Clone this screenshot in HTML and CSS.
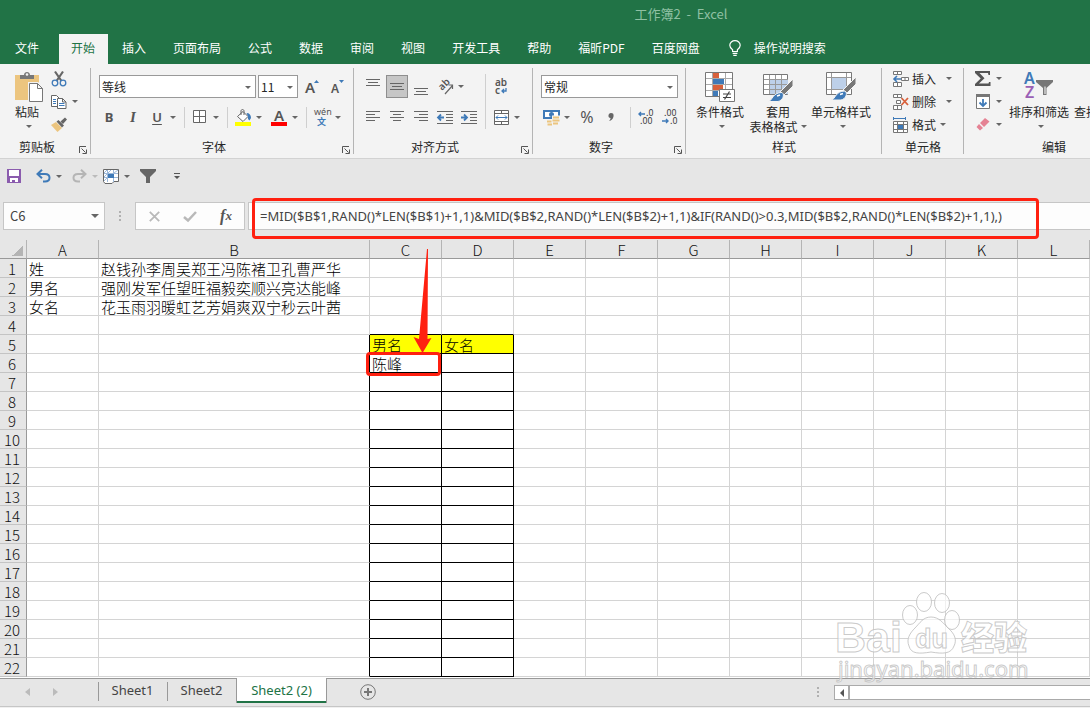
FILE: index.html
```html
<!DOCTYPE html>
<html lang="zh-CN">
<head>
<meta charset="utf-8">
<title>工作簿2 - Excel</title>
<link rel="stylesheet" href="styles.css">
</head>
<body>
<div class="app">
  <header class="titlebar">工作簿2&nbsp; -&nbsp; Excel</header>

  <nav class="tabs">
    <button class="tab tab-file">文件</button>
    <button class="tab tab-active">开始</button>
    <button class="tab">插入</button>
    <button class="tab">页面布局</button>
    <button class="tab">公式</button>
    <button class="tab">数据</button>
    <button class="tab">审阅</button>
    <button class="tab">视图</button>
    <button class="tab">开发工具</button>
    <button class="tab">帮助</button>
    <button class="tab">福昕PDF</button>
    <button class="tab">百度网盘</button>
    <button class="tab tab-tell">
      <svg width="12" height="16" viewBox="0 0 12 16" fill="none" stroke="#fff" stroke-width="1.2"><path d="M3.6 11.5V9.8C2 8.6 .8 7.2 .8 5.2a5.200 4.600 0 0 1 10.400 0c0 2-1.200 3.400-2.800 4.600v1.700zM3.600 13.300h4.800M4.300 15.300h3.400"/></svg>
      操作说明搜索
    </button>
  </nav>

  <div class="ribbon">
    <section class="group group-clip">
      <div class="group-body clip-body">
        <button class="big big-paste">
          <svg width="30" height="30" viewBox="0 0 30 30"><path fill="#ecc57f" d="M1 3h24v25H1z"/><path fill="#777" d="M6 7V3h4c0-4 6-4 6 0h4v4z"/><circle cx="13" cy="2.500" r="1.300" fill="#f3f3f3"/><path fill="#fff" stroke="#f3f3f3" stroke-width="3" d="M15.500 11.500h8l5 5v13h-13z"/><path fill="#fff" stroke="#777" d="M15.500 11.500h8l5 5v13h-13zM23.500 11.500v5h5"/></svg>
          <span>粘贴</span><i class="arrow"></i>
        </button>
        <div class="stack">
          <div class="line"><button class="tool" aria-label="剪切"><svg width="16" height="16" viewBox="0 0 16 16"><path stroke="#666" stroke-width="2.200" d="M4 .5 10.500 10M12 .5 5.500 10"/><circle cx="4" cy="12" r="2.800" fill="none" stroke="#3f7ab8" stroke-width="1.300"/><circle cx="12" cy="12" r="2.800" fill="none" stroke="#3f7ab8" stroke-width="1.300"/></svg></button></div>
          <div class="line"><button class="tool" aria-label="复制"><svg width="16" height="16" viewBox="0 0 16 16" fill="#fff" stroke="#666"><path d="M.5 1.500h5l3 3v8h-8z"/><path d="M6.500 4.500h5l3.500 3.500v6.500H6.500z"/><path d="M11.500 4.500v3.500h3.500" fill="none"/><path stroke="#3f7ab8" d="M2 5.500h3M2 7.500h3M2 9.500h3M8 9.500h5.500M8 11.500h5.500"/></svg></button><button class="caret" aria-label="复制选项"></button></div>
          <div class="line"><button class="tool" aria-label="格式刷"><svg width="16" height="16" viewBox="0 0 16 16"><path fill="#ecc57f" d="M0 8 5 5l6 6-4.500 4z"/><path fill="#666" d="m5.500 4.500 2-1.500 5.500 5.500-2 2zM9.500 4.500 14 .5 16 2.500 12 7z"/></svg></button></div>
        </div>
      </div>
      <footer class="group-foot"><span>剪贴板</span><button class="launcher" aria-label="剪贴板设置"><svg width="8" height="8" viewBox="0 0 8 8" fill="none" stroke="#555"><path d="M.5 7V.5H7M2.500 2.500l4 4M7.500 3.500v4h-4"/></svg></button></footer>
    </section>

    <section class="group group-font">
      <div class="group-body rows">
        <div class="line line-fields">
          <label class="field field-font"><select aria-label="字体"><option>等线</option></select></label>
          <label class="field field-size"><select aria-label="字号"><option>11</option></select></label>
          <button class="tool" aria-label="增大字号"><svg width="14" height="20" viewBox="0 0 14 20"><text class="glyph-a" x="0" y="16" font-size="15">A</text><path fill="#3f7ab8" d="m9 6 2.500-3L14 6z"/></svg></button>
          <button class="tool tool-shrink" aria-label="减小字号"><svg width="14" height="20" viewBox="0 0 14 20"><text class="glyph-a" x="1" y="16" font-size="12">A</text><path fill="#3f7ab8" d="m9 3 2.500 3L14 3z"/></svg></button>
        </div>
        <div class="line line-tools">
          <button class="tool letter bold">B</button><button class="tool letter italic">I</button><button class="tool letter under">U</button><button class="caret" aria-label="下划线选项"></button>
          <span class="sep"></span>
          <button class="tool" aria-label="边框"><svg width="14" height="14" viewBox="0 0 14 14" fill="#fff" stroke="#666"><path d="M.5.5h12v12H.5zM6.500.5v12M.5 6.500h12"/></svg></button><button class="caret" aria-label="边框选项"></button>
          <span class="sep"></span>
          <button class="tool" aria-label="填充颜色"><svg width="16" height="17" viewBox="0 0 16 17"><path fill="#fff" stroke="#666" d="m2.500 7.500 5.500-5 5 5-5 5z"/><path fill="none" stroke="#666" d="M6 6V2c0-2 3-2 3 0v4"/><path fill="#3f7ab8" d="M11.500 4c3 0 4.500 2 4.500 5l-1.500 2.500L13 10V7.500z"/><path fill="#ff0" d="M0 13h16v4H0z"/></svg></button><button class="caret caret-wide" aria-label="填充选项"></button>
          <button class="tool" aria-label="字体颜色"><svg width="16" height="17" viewBox="0 0 16 17"><text class="glyph-a" x="3" y="12" font-size="15">A</text><path fill="#f00" d="M0 13h16v4H0z"/></svg></button><button class="caret" aria-label="字体颜色选项"></button>
          <span class="sep"></span>
          <button class="tool" aria-label="拼音"><svg width="18" height="18" viewBox="0 0 18 18"><text x="1" y="7" class="pinyin">wén</text><text x="4" y="17" class="pinyin-cn">文</text></svg></button><button class="caret" aria-label="拼音选项"></button>
        </div>
      </div>
      <footer class="group-foot"><span>字体</span><button class="launcher" aria-label="字体设置"><svg width="8" height="8" viewBox="0 0 8 8" fill="none" stroke="#555"><path d="M.5 7V.5H7M2.500 2.500l4 4M7.500 3.500v4h-4"/></svg></button></footer>
    </section>

    <section class="group group-align">
      <div class="group-body align-body">
        <div class="rows">
          <div class="line line-fields">
            <button class="tool" aria-label="顶端对齐"><svg width="14" height="16" viewBox="0 0 14 16" stroke="#666"><path d="M0 .5h14M2 3.500h10M0 6.500h14"/></svg></button>
            <button class="tool tool-on" aria-label="垂直居中"><svg width="14" height="16" viewBox="0 0 14 16" stroke="#666"><path d="M0 4.500h14M2 7.500h10M0 10.500h14"/></svg></button>
            <button class="tool" aria-label="底端对齐"><svg width="14" height="16" viewBox="0 0 14 16" stroke="#666"><path d="M0 9.500h14M2 12.500h10M0 15.500h14"/></svg></button>
            <button class="tool" aria-label="方向"><svg width="17" height="16" viewBox="0 0 17 16"><text x="0" y="0" class="glyph-ab" transform="translate(5 12) rotate(-45)">ab</text><path fill="none" stroke="#666" stroke-width="1.200" d="m8 15 7.500-8.500M11.500 6h4v4"/></svg></button><button class="caret" aria-label="方向选项"></button>
          </div>
          <div class="line line-tools">
            <button class="tool" aria-label="左对齐"><svg width="14" height="12" viewBox="0 0 14 12" stroke="#666"><path d="M0 .5h14M0 3.500h9M0 6.500h14M0 9.500h9"/></svg></button>
            <button class="tool" aria-label="居中"><svg width="14" height="12" viewBox="0 0 14 12" stroke="#666"><path d="M0 .5h14M3 3.500h8M0 6.500h14M3 9.500h8"/></svg></button>
            <button class="tool" aria-label="右对齐"><svg width="14" height="12" viewBox="0 0 14 12" stroke="#666"><path d="M0 .5h14M5 3.500h9M0 6.500h14M5 9.500h9"/></svg></button>
            <button class="tool" aria-label="减少缩进量"><svg width="16" height="13" viewBox="0 0 16 13" stroke="#666"><path d="M0 .5h16M9 3.500h7M9 6.500h7M9 9.500h7M0 12.500h16"/><path fill="none" stroke="#3f7ab8" stroke-width="1.800" d="M7 6.500H1M4 3.500l-3 3 3 3"/></svg></button>
            <button class="tool" aria-label="增加缩进量"><svg width="16" height="13" viewBox="0 0 16 13" stroke="#666"><path d="M0 .5h16M9 3.500h7M9 6.500h7M9 9.500h7M0 12.500h16"/><path fill="none" stroke="#3f7ab8" stroke-width="1.800" d="M0 6.500h6M3 3.500l3 3-3 3"/></svg></button>
          </div>
        </div>
        <span class="sep sep-tall"></span>
        <div class="rows">
          <div class="line line-fields"><button class="tool" aria-label="自动换行"><svg width="14" height="18" viewBox="0 0 14 18"><text x="1" y="8" class="glyph-ab">ab</text><text x="1" y="16" class="glyph-ab">c</text><path fill="none" stroke="#3f7ab8" stroke-width="1.300" d="M12 10v3H8M10 11l-2 2 2 2"/></svg></button></div>
          <div class="line line-tools"><button class="tool" aria-label="合并后居中"><svg width="15" height="15" viewBox="0 0 15 15" fill="#fff" stroke="#666"><path d="M.5.5h14v14H.5zM.5 3.500h14M.5 11.500h14M7.500.5v3M7.500 11.500v3"/><path fill="none" stroke="#3f7ab8" d="M2 7.500h11M4 5.500l-2 2 2 2M11 5.500l2 2-2 2"/></svg></button><button class="caret" aria-label="合并选项"></button></div>
        </div>
      </div>
      <footer class="group-foot"><span>对齐方式</span><button class="launcher" aria-label="对齐设置"><svg width="8" height="8" viewBox="0 0 8 8" fill="none" stroke="#555"><path d="M.5 7V.5H7M2.500 2.500l4 4M7.500 3.500v4h-4"/></svg></button></footer>
    </section>

    <section class="group group-number">
      <div class="group-body rows">
        <div class="line line-fields"><label class="field field-number"><select aria-label="数字格式"><option>常规</option></select></label></div>
        <div class="line line-tools">
          <button class="tool" aria-label="会计数字格式"><svg width="17" height="17" viewBox="0 0 17 17"><path fill="#fff" stroke="#3f7ab8" stroke-width="2" d="M1 2h15v7H1z"/><circle cx="8.500" cy="5.500" r="2.500" fill="#3f7ab8"/><path fill="#f3f3f3" d="M9 6.500h8V17H9zM3.500 11H11v6H3.500z"/><path fill="#ecc57f" d="M10 7.500h6v2h-6zM9.500 10.500h7v2h-7zM10 13.500h5v2h-5zM4 11.500h4.500v2H4zM4.500 14.500H9v2H4.500z"/></svg></button><button class="caret caret-wide" aria-label="货币选项"></button>
          <button class="tool letter percent">%</button>
          <button class="tool" aria-label="千位分隔"><svg width="6" height="9" viewBox="0 0 6 9"><path fill="#666" d="M3 0c2 0 3 1 2.500 3.500C5 6 3.500 7.500 1 8c1-1 1.500-1.700 1.500-3C-.5 5 0 0 3 0z"/></svg></button>
          <span class="sep"></span>
          <button class="tool" aria-label="增加小数位数"><svg width="16" height="15" viewBox="0 0 16 15"><text class="digits" x="8" y="6">.0</text><text class="digits" x="2" y="14">.00</text><path fill="none" stroke="#3f7ab8" stroke-width="1.400" d="M7 4H1M3 2 1 4l2 2"/></svg></button>
          <button class="tool" aria-label="减少小数位数"><svg width="16" height="15" viewBox="0 0 16 15"><text class="digits" x="2" y="6">.00</text><text class="digits" x="8" y="14">.0</text><path fill="none" stroke="#3f7ab8" stroke-width="1.400" d="M0 11h6M4 9l2 2-2 2"/></svg></button>
        </div>
      </div>
      <footer class="group-foot"><span>数字</span><button class="launcher" aria-label="数字设置"><svg width="8" height="8" viewBox="0 0 8 8" fill="none" stroke="#555"><path d="M.5 7V.5H7M2.500 2.500l4 4M7.500 3.500v4h-4"/></svg></button></footer>
    </section>

    <section class="group group-style">
      <div class="group-body style-body">
        <button class="big big-cond">
          <svg width="30" height="30" viewBox="0 0 30 30"><path fill="#fff" stroke="#777" d="M.5.5h27v24H.5z"/><path stroke="#aaa" d="M7.500 1v23M20.500 1v23M1 6.500h26M1 12.500h26M1 18.500h26"/><path fill="#d8613c" d="M8 1h6v5H8zM8 13h10v5H8z"/><path fill="#3f7ab8" d="M8 7h11v5H8zM8 19h5v5H8z"/><path fill="#fff" stroke="#777" d="M14.500 17.500h15v12h-15z"/><path stroke="#444" stroke-width="1.200" d="M18 22h8M18 25.500h8M24.500 19.500l-5 8"/></svg>
          <span>条件格式</span><i class="arrow"></i>
        </button>
        <button class="big big-table">
          <svg width="30" height="30" viewBox="0 0 30 30"><path fill="#fff" stroke="#777" d="M.5 2.500h24v20H.5z"/><path fill="#bdd0e9" d="M7 8h18v14H7z"/><path stroke="#999" d="M6.500 3v19M12.500 3v19M18.500 3v19M1 7.500h24M1 12.500h24M1 17.500h24"/><path fill="#777" stroke="#f3f3f3" d="M30 7v7l-9 9-4-3z"/><path fill="#3f7ab8" stroke="#f3f3f3" d="M19 20.500c3 2 1 8-4 9H5.500c4-1 4-9 13.500-9z"/><path stroke="#fff" stroke-width="1.500" d="m14 24 3-1"/></svg>
          <span>套用</span><span class="with-arrow">表格格式<i class="arrow"></i></span>
        </button>
        <button class="big big-cell">
          <svg width="30" height="30" viewBox="0 0 30 30"><path fill="#fff" stroke="#777" d="M.5.5h25v22H.5z"/><path stroke="#999" d="M5.500 1v21M20.500 1v21M1 5.500h24M1 17.500h24"/><path fill="#bdd0e9" d="M6 6h14v11H6z"/><path fill="#777" stroke="#f3f3f3" d="M30 5v7l-9 9-4-3z"/><path fill="#3f7ab8" stroke="#f3f3f3" d="M19 19c3 2 1 8-4 9H5.500c4-1 4-9 13.500-9z"/><path stroke="#fff" stroke-width="1.500" d="m14 22.500 3-1"/></svg>
          <span>单元格样式</span><i class="arrow"></i>
        </button>
      </div>
      <footer class="group-foot"><span>样式</span></footer>
    </section>

    <section class="group group-cells">
      <div class="group-body stack cells-body">
        <div class="line"><button class="wide"><svg width="16" height="16" viewBox="0 0 16 16" fill="#fff" stroke="#777"><path d="M.5.500h8v3h-8zM4.500.5v3M.5 11.500h8v4h-8zM4.500 11.500v4M8.500 6.500h7v3h-7zM12 6.500v3"/><path fill="none" stroke="#3f7ab8" stroke-width="1.600" d="M8 8H1M4 5 1 8l3 3"/></svg>插入</button><button class="caret" aria-label="插入选项"></button></div>
        <div class="line"><button class="wide"><svg width="16" height="16" viewBox="0 0 16 16" fill="#fff" stroke="#777"><path d="M.5.500h8v3h-8zM4.500.5v3M.5 11.500h8v4h-8zM4.500 11.500v4M3.500 6.500h4v3h-4z"/><path fill="none" stroke="#d8613c" stroke-width="1.800" d="m8.500 4 6.500 7M15 4l-6.500 7"/></svg>删除</button><button class="caret" aria-label="删除选项"></button></div>
        <div class="line line-near"><button class="wide"><svg width="16" height="16" viewBox="0 0 16 16" fill="#fff" stroke="#777"><path d="M.5 4.500h14v11H.5zM4.500 4.500v11M10.500 4.500v11M.5 7.500h14M.5 12.500h14"/><path fill="#3f7ab8" stroke="none" d="M5 8h5v4H5z"/><path stroke="#3f7ab8" fill="none" d="M.5 0v3M12.500 0v3M1 1.500h11"/></svg>格式</button><button class="caret" aria-label="格式选项"></button></div>
      </div>
      <footer class="group-foot"><span>单元格</span></footer>
    </section>

    <section class="group group-edit">
      <div class="group-body edit-body">
        <div class="stack">
          <div class="line"><button class="tool" aria-label="自动求和"><svg width="16" height="15" viewBox="0 0 16 15"><path fill="#555" d="M0 0h15v4h-1.500L13 2H4.500l5 5.300L4 12.500h9.500L14 11h1.500v4H0v-2l5.700-5.500L0 2z"/></svg></button><button class="caret" aria-label="求和选项"></button></div>
          <div class="line"><button class="tool" aria-label="填充"><svg width="14" height="15" viewBox="0 0 14 15"><path fill="#fff" stroke="#777" d="M.5.5h13v14H.5z"/><path fill="#777" d="M0 0h14v3H0z"/><path fill="none" stroke="#3f7ab8" stroke-width="1.800" d="M7 5v7M3.500 8.500 7 12l3.500-3.500"/></svg></button><button class="caret" aria-label="填充选项"></button></div>
          <div class="line"><button class="tool" aria-label="清除"><svg width="14" height="13" viewBox="0 0 14 13"><path fill="#e58294" d="m9 0 4.500 3.500L8 9 4 5zM3 6l4 4-3 2.500L.5 9z"/></svg></button><button class="caret" aria-label="清除选项"></button></div>
        </div>
        <button class="big big-sort">
          <svg width="30" height="30" viewBox="0 0 30 30"><text x="0" y="12" class="sort-a">A</text><text x="1" y="26" class="sort-z">Z</text><path fill="#777" d="M12 8h17v2l-6.500 6v7h-3.500v-7L12 10z"/><path fill="#fff" d="M20.500 14.500h1V22h-1z"/></svg>
          <span>排序和筛选</span><i class="arrow"></i>
        </button>
        <button class="big big-find">
          <svg width="24" height="30" viewBox="0 0 24 30" fill="none" stroke="#777" stroke-width="2"><circle cx="14" cy="11" r="7"/><path d="m9 16-7 8"/></svg>
          <span>查找和选择</span><i class="arrow"></i>
        </button>
      </div>
      <footer class="group-foot"><span>编辑</span></footer>
    </section>
  </div>

  <div class="quick">
    <button class="tool" aria-label="保存"><svg width="14" height="14" viewBox="0 0 14 14"><path fill="#8b5cae" d="M0 0h14v14H0z"/><path fill="#fff" d="M2 1h10v6H2zM3 9h8v4H8v-2H5v2H3z"/></svg></button>
    <button class="tool q-undo" aria-label="撤消"><svg width="15" height="14" viewBox="0 0 15 14" fill="none" stroke="#3f7ab8" stroke-width="2"><path d="M6 .8 1.500 5 6 9.200M2 5h7c6 0 6 7.500 0 7.500H7"/></svg></button><button class="caret" aria-label="撤消记录"></button>
    <button class="tool q-redo" aria-label="恢复"><svg width="15" height="14" viewBox="0 0 15 14" fill="none" stroke="#b5b5b5" stroke-width="2"><path d="M9 .8 13.500 5 9 9.200M13 5H6c-6 0-6 7.500 0 7.500h2"/></svg></button><button class="caret caret-off" aria-label="恢复记录"></button>
    <button class="tool" aria-label="选择窗格"><svg width="16" height="15" viewBox="0 0 16 15"><path fill="#fff" stroke="#666" d="M.5.5h15v12H11l-2 2H2l-1.500-2z"/><path stroke="#9db9da" d="M4.500 1v12M10.500 1v12M1 4.500h14M1 8.500h14M1 4l3-3M5 4l3-3M11 4l4-3M1 8l3-3M1 12l3-3"/><path fill="#3f7ab8" d="M5 5h6v4H5z"/></svg></button><button class="caret" aria-label="选择选项"></button>
    <button class="tool q-filter" aria-label="筛选"><svg width="16" height="14" viewBox="0 0 16 14"><path fill="#666" d="M0 0h16v2L10 8v6H6V8L0 2z"/></svg></button>
    <button class="tool q-more" aria-label="自定义快速访问工具栏"><svg width="6" height="7" viewBox="0 0 6 7"><path fill="#555" d="M0 0h6v1H0zM0 3h6L3 6z"/></svg></button>
  </div>

  <div class="formula-bar">
    <div class="namebox"><input type="text" value="C6" aria-label="名称框"><button class="caret" aria-label="名称列表"></button></div>
    <span class="grip"></span>
    <div class="fx-box">
      <button class="tool" aria-label="取消"><svg width="11" height="11" viewBox="0 0 11 11" stroke="#b9b9b9" stroke-width="1.800"><path d="m.8.8 9.400 9.400M10.200.8.8 10.200"/></svg></button>
      <button class="tool" aria-label="输入"><svg width="14" height="11" viewBox="0 0 14 11" fill="none" stroke="#b9b9b9" stroke-width="2.500"><path d="m1 6 4 3.500L13 1"/></svg></button>
      <button class="tool fx" aria-label="插入函数">f<small>x</small></button>
    </div>
    <div class="formula">
      <input type="text" aria-label="编辑栏" value="=MID($B$1,RAND()*LEN($B$1)+1,1)&amp;MID($B$2,RAND()*LEN($B$2)+1,1)&amp;IF(RAND()&gt;0.3,MID($B$2,RAND()*LEN($B$2)+1,1),)">
      <span class="mark mark-formula"></span>
    </div>
  </div>

  <main class="sheet">
    <table class="grid">
      <colgroup><col class="col-head"><col class="col-std"><col class="col-names"><col class="col-std"><col class="col-std"><col class="col-std"><col class="col-std"><col class="col-std"><col class="col-std"><col class="col-std"><col class="col-std"><col class="col-std"><col></colgroup>
      <thead><tr><th class="corner"></th><th>A</th><th>B</th><th>C</th><th>D</th><th>E</th><th>F</th><th>G</th><th>H</th><th>I</th><th>J</th><th>K</th><th>L</th></tr></thead>
      <tbody>
        <tr><th>1</th><td>姓</td><td>赵钱孙李周吴郑王冯陈褚卫孔曹严华</td><td></td><td></td><td></td><td></td><td></td><td></td><td></td><td></td><td></td><td></td></tr>
        <tr><th>2</th><td>男名</td><td>强刚发军任望旺福毅奕顺兴亮达能峰</td><td></td><td></td><td></td><td></td><td></td><td></td><td></td><td></td><td></td><td></td></tr>
        <tr><th>3</th><td>女名</td><td>花玉雨羽暖虹艺芳娟爽双宁秒云叶茜</td><td></td><td></td><td></td><td></td><td></td><td></td><td></td><td></td><td></td><td></td></tr>
        <tr class="above"><th>4</th><td></td><td></td><td></td><td></td><td></td><td></td><td></td><td></td><td></td><td></td><td></td><td></td></tr>
        <tr class="framed titles"><th>5</th><td></td><td></td><td>男名</td><td>女名</td><td></td><td></td><td></td><td></td><td></td><td></td><td></td><td></td></tr>
        <tr class="framed"><th>6</th><td></td><td></td><td class="current">陈峰<span class="mark mark-cell"></span><svg class="pointer" width="18" height="104" viewBox="0 0 18 104"><path fill="#ff2010" d="M14 0h1l-.5 90 4-1L9.500 104 .500 88l5.500 2z"/></svg></td><td></td><td></td><td></td><td></td><td></td><td></td><td></td><td></td><td></td></tr>
        <tr class="framed"><th>7</th><td></td><td></td><td></td><td></td><td></td><td></td><td></td><td></td><td></td><td></td><td></td><td></td></tr>
        <tr class="framed"><th>8</th><td></td><td></td><td></td><td></td><td></td><td></td><td></td><td></td><td></td><td></td><td></td><td></td></tr>
        <tr class="framed"><th>9</th><td></td><td></td><td></td><td></td><td></td><td></td><td></td><td></td><td></td><td></td><td></td><td></td></tr>
        <tr class="framed"><th>10</th><td></td><td></td><td></td><td></td><td></td><td></td><td></td><td></td><td></td><td></td><td></td><td></td></tr>
        <tr class="framed"><th>11</th><td></td><td></td><td></td><td></td><td></td><td></td><td></td><td></td><td></td><td></td><td></td><td></td></tr>
        <tr class="framed"><th>12</th><td></td><td></td><td></td><td></td><td></td><td></td><td></td><td></td><td></td><td></td><td></td><td></td></tr>
        <tr class="framed"><th>13</th><td></td><td></td><td></td><td></td><td></td><td></td><td></td><td></td><td></td><td></td><td></td><td></td></tr>
        <tr class="framed"><th>14</th><td></td><td></td><td></td><td></td><td></td><td></td><td></td><td></td><td></td><td></td><td></td><td></td></tr>
        <tr class="framed"><th>15</th><td></td><td></td><td></td><td></td><td></td><td></td><td></td><td></td><td></td><td></td><td></td><td></td></tr>
        <tr class="framed"><th>16</th><td></td><td></td><td></td><td></td><td></td><td></td><td></td><td></td><td></td><td></td><td></td><td></td></tr>
        <tr class="framed"><th>17</th><td></td><td></td><td></td><td></td><td></td><td></td><td></td><td></td><td></td><td></td><td></td><td></td></tr>
        <tr class="framed"><th>18</th><td></td><td></td><td></td><td></td><td></td><td></td><td></td><td></td><td></td><td></td><td></td><td></td></tr>
        <tr class="framed"><th>19</th><td></td><td></td><td></td><td></td><td></td><td></td><td></td><td></td><td></td><td></td><td></td><td></td></tr>
        <tr class="framed"><th>20</th><td></td><td></td><td></td><td></td><td></td><td></td><td></td><td></td><td></td><td></td><td></td><td></td></tr>
        <tr class="framed"><th>21</th><td></td><td></td><td></td><td></td><td></td><td></td><td></td><td></td><td></td><td></td><td></td><td></td></tr>
        <tr class="framed"><th>22</th><td></td><td></td><td></td><td></td><td></td><td></td><td></td><td></td><td></td><td></td><td></td><td></td></tr>
      </tbody>
    </table>
  </main>

  <div class="sheetbar">
    <button class="nav-arrow" aria-label="上一个工作表"><svg width="5" height="8" viewBox="0 0 5 8"><path fill="#bbb" d="M5 0v8L0 4z"/></svg></button>
    <button class="nav-arrow" aria-label="下一个工作表"><svg width="5" height="8" viewBox="0 0 5 8"><path fill="#bbb" d="M0 0v8l5-4z"/></svg></button>
    <button class="sheet-tab">Sheet1</button>
    <button class="sheet-tab">Sheet2</button>
    <button class="sheet-tab sheet-tab-on">Sheet2 (2)</button>
    <button class="add-sheet" aria-label="新工作表"><svg width="16" height="16" viewBox="0 0 16 16" fill="none" stroke="#777"><circle cx="8" cy="8" r="7.300"/><path stroke-width="2" d="M8 4v8M4 8h8"/></svg></button>
    <span class="grip grip-right"></span>
    <div class="hscroll"><button aria-label="向左滚动"><svg width="4" height="8" viewBox="0 0 4 8"><path fill="#555" d="M4 0v8L0 4z"/></svg></button></div>
    <svg class="watermark" width="204" height="100" viewBox="0 0 204 100" aria-hidden="true">
      <g class="wm-shape">
        <ellipse cx="78" cy="24" rx="7.500" ry="9.500"/><ellipse cx="92" cy="11" rx="7.500" ry="9.500"/><ellipse cx="110" cy="12" rx="7.500" ry="9.500"/><ellipse cx="120" cy="29" rx="7.500" ry="9.500"/>
        <path d="M99 26c8 0 12 6 17 11 7 6 9 12 6 18-3 8-11 8-23 6-12 2-20 2-22-6-3-7 1-13 6-18 5-5 8-11 16-11z"/>
      </g>
      <text class="wm-text wm-bai" x="3" y="61">Bai</text>
      <text class="wm-text wm-du" x="83" y="57">du</text>
      <text class="wm-text wm-cn" x="129" y="59">经验</text>
      <text class="wm-text wm-url" x="6" y="86">jingyan.baidu.com</text>
    </svg>
  </div>
</div>
</body>
</html>
```
FILE: styles.css
```css
* { box-sizing: border-box; }

body {
  margin: 0;
  background: #e6e6e6;
  color: #262626;
  font: 12px/16px "Noto Sans CJK SC", sans-serif;
}

button, input, select {
  margin: 0;
  padding: 0;
  border: 0;
  background: none;
  color: inherit;
  font: inherit;
}

svg { display: block; flex: none; overflow: visible; }

.app {
  display: flex;
  flex-direction: column;
  min-height: 100vh;
  overflow: hidden;
}

/* Title and tabs */
.titlebar {
  height: 34px;
  padding: 6px 0 0 272px;
  background: #217346;
  color: #8fc0a3;
  font-size: 13px;
  text-align: center;
}

.tabs {
  display: flex;
  gap: 1px;
  height: 30px;
  background: #217346;
  color: #fff;
}

.tab {
  display: flex;
  align-items: center;
  flex: none;
  padding: 0 13px 2px;
  white-space: nowrap;
}

.tab-file { padding: 0 19px 2px 15px; }
.tab-active { padding-left: 12px; background: #f3f3f3; color: #217346; }
.tab-tell { gap: 13px; padding-left: 15px; }

/* Ribbon */
.ribbon {
  display: flex;
  height: 95px;
  background: #f3f3f3;
  border-bottom: 1px solid #d2d2d2;
  overflow: hidden;
}

.group {
  display: flex;
  flex-direction: column;
  flex: none;
  position: relative;
}

.group::after {
  content: "";
  position: absolute;
  right: 0;
  top: 4px;
  bottom: 4px;
  width: 1px;
  background: #b4b4b4;
}

.group-clip { width: 91px; }
.group-font { width: 263px; }
.group-align { width: 179px; }
.group-number { width: 153px; }
.group-style { width: 196px; }
.group-cells { width: 82px; }
.group-edit { width: 180px; }

.group-body { height: 73px; }

.group-foot {
  display: flex;
  align-items: center;
  height: 20px;
  text-align: center;
}

.group-foot span { flex: 1; }
.launcher { width: 17px; height: 16px; padding: 5px 0 0 5px; }

.rows { display: flex; flex-direction: column; padding-top: 11px; padding-left: 6px; }
.line { display: flex; align-items: center; }
.line-fields { height: 23px; }
.line-tools { height: 40px; padding-bottom: 1px; }
.stack { padding-top: 3px; }
.stack .line { height: 23px; }

.tool {
  display: flex;
  align-items: center;
  justify-content: center;
  flex: none;
  width: 24px;
  height: 23px;
}

.tool-on { width: 22px; margin: 0 1px; background: #c6c6c6; border: 1px solid #8e8e8e; }
.tool-shrink { margin-left: 1px; }

.caret { position: relative; flex: none; width: 8px; height: 22px; }

.caret::before, .field::after, .arrow {
  content: "";
  display: block;
  width: 0;
  height: 0;
  margin: auto;
  border: 3px solid transparent;
  border-top-color: #666;
  border-bottom: 0;
}

.caret-off::before { border-top-color: #bbb; }
.caret-wide { margin-right: 4px; }

.sep { flex: none; width: 1px; height: 21px; margin: 0 3px 0 7px; background: #cfcfcf; }

.letter { color: #555; font-family: "Noto Sans", sans-serif; font-size: 13px; }
.letter.percent { font-size: 16px; }
.bold { font-weight: 700; }
.letter.italic { font-family: "Liberation Serif", serif; font-size: 15px; font-style: italic; font-weight: 700; }
.under { font-weight: 600; text-decoration: underline; text-underline-offset: 2px; }

.field {
  position: relative;
  display: flex;
  height: 23px;
  background: #fff;
  border: 1px solid #999;
}

.field select { flex: 1; width: 100%; padding: 0 2px; appearance: none; }
.field::after { position: absolute; right: 4px; top: 10px; }
.field-font { width: 157px; margin: 0 2px; }
.field-size { width: 40px; margin-right: 2px; }
.field-number { width: 137px; margin-left: 2px; }

.align-body { display: flex; padding-left: 7px; }
.align-body .rows { padding-left: 0; }
.sep-tall { height: 55px; margin: 10px 3px 0 4px; }

.big {
  display: flex;
  flex-direction: column;
  align-items: center;
  flex: none;
  line-height: 15px;
  padding-top: 8px;
  white-space: nowrap;
}

.big svg { margin-bottom: 2px; }
.big .arrow { margin: 6px 0 0 4px; }
.with-arrow { display: flex; align-items: center; }
.big .with-arrow .arrow { margin: 0 0 0 3px; }

.big-paste { width: 47px; padding-left: 11px; }
.big-paste span { margin-right: 4px; }
.big-paste .arrow { margin-left: 0; }
.clip-body { display: flex; }

.style-body { display: flex; padding-left: 6px; }
.big-cond { width: 56px; }
.big-table { width: 60px; }
.big-cell { width: 66px; }

.cells-body { padding-left: 11px; }
.wide { display: flex; align-items: center; gap: 3px; width: 52px; height: 22px; white-space: nowrap; }
.line-near .wide { width: 46px; }

.edit-body { display: flex; padding-left: 7px; }
.big-sort { width: 66px; margin-left: 3px; }
.big-find { width: 64px; }

.glyph-a { fill: #555; font-family: "Noto Sans", sans-serif; font-weight: 600; }
.glyph-ab { fill: #555; font: 600 10px "Noto Sans", sans-serif; }
.pinyin { fill: #555; font: 9px "Noto Sans", sans-serif; }
.pinyin-cn { fill: #3f7ab8; font: 700 9px "Noto Sans CJK SC", sans-serif; }
.digits { fill: #444; font: 9px "Noto Sans CJK SC", sans-serif; }
.sort-a { fill: #3f7ab8; font: 600 16px "Noto Sans", sans-serif; }
.sort-z { fill: #9a5fb5; font: 600 16px "Noto Sans", sans-serif; }

/* Quick access */
.quick { display: flex; align-items: center; height: 34px; padding-left: 2px; }
.q-undo { margin-left: 5px; }
.q-redo { margin-left: 4px; }
.q-filter { margin-left: 5px; }
.q-more { margin-left: 5px; }

/* Formula bar */
.formula-bar { display: flex; align-items: center; height: 47px; padding: 0 0 1px 3px; }

.namebox, .fx-box, .formula {
  display: flex;
  align-items: center;
  height: 28px;
  background: #fdfdfd;
  border: 1px solid #c6c6c6;
}

.namebox { width: 102px; padding-right: 5px; font-size: 13px; color: #444; }
.namebox input { flex: 1; min-width: 0; padding-left: 6px; }
.namebox .caret::before { border-width: 4px 4px 0; }

.grip {
  width: 2px;
  height: 10px;
  margin: 0 14px;
  background: repeating-linear-gradient(#b0b0b0 0 2px, transparent 2px 4px);
}

.fx-box { width: 110px; justify-content: space-between; padding: 0 6px; }
.fx { color: #555; font: italic 700 16px "Liberation Serif", serif; }
.fx small { font-size: 13px; }

.formula { position: relative; flex: 1; margin-left: 3px; border-right: 0; }
.formula input { flex: 1; min-width: 0; height: 26px; padding-left: 11px; color: #444; font: 13px "Noto Sans", sans-serif; }

.mark { position: absolute; border: 3px solid #ff2010; border-radius: 4px; pointer-events: none; }
.mark-formula { left: 3px; right: 51px; top: -5px; bottom: -10px; }
.mark-cell { left: -4px; right: 0; top: -2px; bottom: -4px; }

/* Grid */
.sheet { flex: 1; min-height: 438px; background: #fff; }
.grid { width: 100%; min-width: 1090px; table-layout: fixed; border-collapse: separate; border-spacing: 0; }
.col-head { width: 27px; }
.col-std { width: 72px; }
.col-names { width: 271px; }

.grid th, .grid td { height: 19px; padding: 2px 0 0; line-height: 16px; white-space: nowrap; }

.grid th {
  background: #e6e6e6;
  border-right: 1px solid #999;
  border-bottom: 1px solid #c4c4c4;
  color: #111;
  font-size: 15px;
  font-weight: 300;
  text-align: center;
}

.grid thead th {
  border-right-color: #b4b4b4;
  border-bottom-color: #999;
}

.grid tbody th { padding-right: 2px; }

.grid .corner {
  background: linear-gradient(135deg, transparent 50%, #b4b4b4 50%) 12px 5px / 11px 11px no-repeat #e6e6e6;
}

.grid td {
  padding-left: 2px;
  border-right: 1px solid #d4d4d4;
  border-bottom: 1px solid #d4d4d4;
  color: #000;
  font-size: 15px;
  font-weight: 300;
}

.above td:nth-child(4), .above td:nth-child(5) { border-bottom-color: #000; }
.framed td:nth-child(3) { border-right-color: #000; }
.framed td:nth-child(4), .framed td:nth-child(5) { border-color: #000; }
.titles td:nth-child(4), .titles td:nth-child(5) { background: #ff0; }

.grid .current { position: relative; }
.pointer { position: absolute; right: 10px; bottom: 19px; }

/* Sheet tabs */
.sheetbar {
  position: relative;
  display: flex;
  height: 30px;
  border-top: 1px solid #999;
  background: linear-gradient(#e6e6e6 27px, #c6c6c6 27px 28px, #f0f0f0 28px);
  font: 13px/16px "Noto Sans", sans-serif;
  color: #444;
}

.nav-arrow { width: 28px; height: 26px; display: flex; align-items: center; justify-content: center; }
.nav-arrow:first-child { margin-left: 13px; }
.nav-arrow + .sheet-tab { margin-left: 29px; }

.sheet-tab {
  flex: none;
  width: 69px;
  height: 24px;
  padding-bottom: 2px;
  background: linear-gradient(#999, #999) 0 3px / 1px 19px no-repeat;
}

.sheet-tab-on {
  width: 91px;
  margin-top: -1px;
  height: 25px;
  background: #fff;
  border: solid #999;
  border-width: 0 1px;
  box-shadow: inset 0 -2px #217346;
  color: #217346;
}

.add-sheet { width: 16px; height: 16px; margin: 5px 0 0 33px; }
.grip-right { margin: 8px 15px 0 auto; }

.hscroll {
  flex: none;
  width: 256px;
  height: 15px;
  margin-top: 6px;
  background: #fff;
  border: 1px solid #aaa;
  border-right: 0;
}

.hscroll button {
  display: flex;
  align-items: center;
  justify-content: center;
  width: 15px;
  height: 13px;
  border-right: 2px solid #aaa;
}

/* Watermark */
.watermark { position: absolute; right: 54px; bottom: 17px; pointer-events: none; }
.wm-shape, .wm-text { fill: rgba(255, 255, 255, .65); stroke: #bdbdbd; stroke-width: 1px; stroke-opacity: .8; }
.wm-text { font-family: "Liberation Sans", sans-serif; font-weight: 700; }
.wm-bai { font-size: 43px; }
.wm-du { font-size: 27px; }
.wm-cn { font: 900 33px "Noto Sans CJK SC", sans-serif; }
.wm-url { font: 22px "Noto Sans", sans-serif; }
```
